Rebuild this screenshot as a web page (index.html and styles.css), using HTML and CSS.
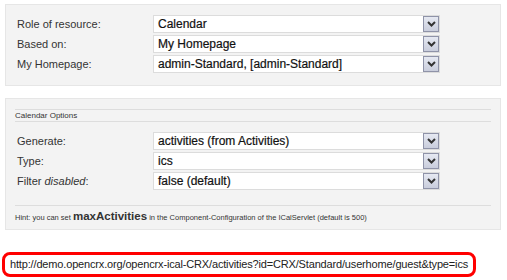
FILE: index.html
```html
<!DOCTYPE html>
<html>
<head>
<meta charset="utf-8">
<link rel="stylesheet" href="styles.css">
</head>
<body>
<div class="panel panel-top">
  <div class="row"><span class="label">Role of resource:</span><div class="select"><span class="value">Calendar</span><span class="btn"><svg width="9" height="6" viewBox="0 0 9 6"><path d="M1 1 L4.5 4.5 L8 1" fill="none" stroke="#333" stroke-width="2"/></svg></span></div></div>
  <div class="row"><span class="label">Based on:</span><div class="select"><span class="value">My Homepage</span><span class="btn"><svg width="9" height="6" viewBox="0 0 9 6"><path d="M1 1 L4.5 4.5 L8 1" fill="none" stroke="#333" stroke-width="2"/></svg></span></div></div>
  <div class="row"><span class="label">My Homepage:</span><div class="select"><span class="value">admin-Standard, [admin-Standard]</span><span class="btn"><svg width="9" height="6" viewBox="0 0 9 6"><path d="M1 1 L4.5 4.5 L8 1" fill="none" stroke="#333" stroke-width="2"/></svg></span></div></div>
</div>
<div class="panel panel-opts">
  <div class="legend">Calendar Options</div>
  <div class="rows">
    <div class="row"><span class="label">Generate:</span><div class="select"><span class="value">activities (from Activities)</span><span class="btn"><svg width="9" height="6" viewBox="0 0 9 6"><path d="M1 1 L4.5 4.5 L8 1" fill="none" stroke="#333" stroke-width="2"/></svg></span></div></div>
    <div class="row"><span class="label">Type:</span><div class="select"><span class="value">ics</span><span class="btn"><svg width="9" height="6" viewBox="0 0 9 6"><path d="M1 1 L4.5 4.5 L8 1" fill="none" stroke="#333" stroke-width="2"/></svg></span></div></div>
    <div class="row"><span class="label">Filter <i>disabled</i>:</span><div class="select"><span class="value">false (default)</span><span class="btn"><svg width="9" height="6" viewBox="0 0 9 6"><path d="M1 1 L4.5 4.5 L8 1" fill="none" stroke="#333" stroke-width="2"/></svg></span></div></div>
  </div>
  <div class="hint">Hint: you can set <b>maxActivities</b> in the Component-Configuration of the ICalServlet (default is 500)</div>
</div>
<div class="url">http://demo.opencrx.org/opencrx-ical-CRX/activities?id=CRX/Standard/userhome/guest&amp;type=ics</div>
</body>
</html>
```
FILE: styles.css
```css
html, body { margin: 0; padding: 0; background: #fff; }
body { font-family: "Liberation Sans", Arial, sans-serif; color: #333; width: 507px; height: 280px; overflow: hidden; }
.panel { margin-left: 5px; width: 494px; background: #f3f3f3; border: 1px solid #e6e6e6; }
.panel-top { margin-top: 4px; padding: 10px 0 12px 0; }
.row { display: flex; align-items: center; height: 18px; margin-bottom: 2px; }
.row:last-child { margin-bottom: 0; }
.label { width: 136px; padding-left: 11px; font-size: 11px; color: #333; }
.label i { font-style: italic; }
.select { box-sizing: border-box; width: 287px; height: 18px; background: #fff; border: 1px solid #dcdcdc; display: flex; align-items: center; justify-content: space-between; }
.value { font-size: 12px; color: #111; padding-left: 4px; line-height: 16px; -webkit-text-stroke: 0.2px #111; }
.btn { box-sizing: border-box; width: 16px; height: 16px; border: 1px solid #8f93a8; background: linear-gradient(#e6e9f2, #c9cddc); display: flex; align-items: center; justify-content: center; }
.btn svg { display: block; }
.panel-opts { margin-top: 12px; padding: 10px 0 0 0; }
.legend { margin: 0 9px; border-top: 1px solid #ddd; border-bottom: 1px solid #ddd; font-size: 8px; line-height: 11px; color: #333; }
.rows { padding-top: 10px; }
.hint { margin: 15px 9px 0 9px; border-top: 1px solid #ddd; font-size: 7.5px; line-height: 20px; height: 23px; color: #333; white-space: nowrap; }
.hint b { font-size: 11.5px; }
.url { margin: 22px 0 0 2px; width: 474px; box-sizing: border-box; height: 25px; border: 3px solid #f00; border-radius: 8px; font-size: 11px; line-height: 19px; padding-left: 5px; color: #222; white-space: nowrap; letter-spacing: -0.16px; }
```
